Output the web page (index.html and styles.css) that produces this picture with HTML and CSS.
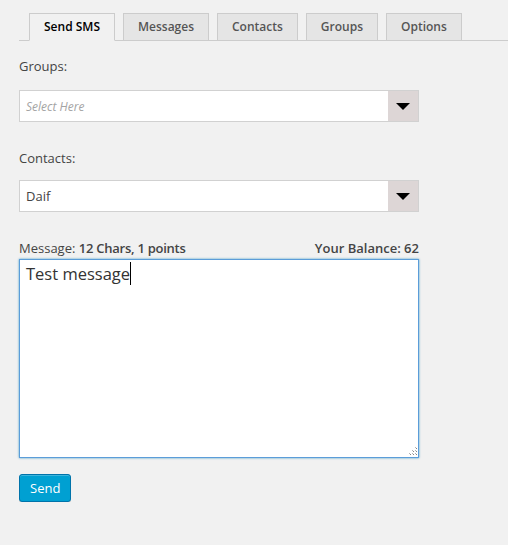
FILE: index.html
```html
<!DOCTYPE html>
<html>
<head>
<meta charset="utf-8">
<link rel="stylesheet" href="styles.css">
</head>
<body>
<div class="wrap">
  <nav class="tabs">
    <a class="tab active">Send SMS</a>
    <a class="tab">Messages</a>
    <a class="tab">Contacts</a>
    <a class="tab">Groups</a>
    <a class="tab">Options</a>
  </nav>

  <div class="field field-groups">
    <label class="label">Groups:</label>
    <div class="select">
      <span class="select-value placeholder">Select Here</span>
      <span class="select-arrow"><span class="tri"></span></span>
    </div>
  </div>

  <div class="field field-contacts">
    <label class="label">Contacts:</label>
    <div class="select">
      <span class="select-value">Daif</span>
      <span class="select-arrow"><span class="tri"></span></span>
    </div>
  </div>

  <div class="field field-message">
    <div class="msg-head">
      <span>Message: <b class="count">12 Chars, 1 points</b></span>
      <b>Your Balance: 62</b>
    </div>
    <div class="textarea">Test message<span class="caret"></span>
      <svg class="grip" width="9" height="9" viewBox="0 0 9 9">
        <rect x="7" y="0" width="1" height="1" fill="#b5b5b5"/>
        <rect x="7" y="3" width="1" height="1" fill="#b5b5b5"/>
        <rect x="4" y="3" width="1" height="1" fill="#b5b5b5"/>
        <rect x="7" y="6" width="1" height="1" fill="#b5b5b5"/>
        <rect x="4" y="6" width="1" height="1" fill="#b5b5b5"/>
        <rect x="1" y="6" width="1" height="1" fill="#b5b5b5"/>
        <rect x="8" y="1" width="1" height="1" fill="#888"/>
        <rect x="8" y="4" width="1" height="1" fill="#888"/>
        <rect x="5" y="4" width="1" height="1" fill="#888"/>
        <rect x="8" y="7" width="1" height="1" fill="#888"/>
        <rect x="5" y="7" width="1" height="1" fill="#888"/>
        <rect x="2" y="7" width="1" height="1" fill="#888"/>
      </svg>
    </div>
  </div>

  <button class="btn">Send</button>
</div>
</body>
</html>
```

FILE: styles.css
```css
html, body {
  margin: 0;
  padding: 0;
  background: #f1f1f1;
}
body {
  font-family: "Open Sans", "DejaVu Sans", sans-serif;
  font-size: 13px;
  color: #444;
}
.wrap {
  padding-left: 19px;
  padding-top: 13px;
}
.tabs {
  display: flex;
  gap: 8px;
  padding-left: 10px;
  border-bottom: 1px solid #ccc;
}
.tab {
  display: block;
  font-size: 12px;
  font-weight: 600;
  line-height: 26px;
  padding: 0 14px;
  border: 1px solid #ccc;
  background: #e5e5e5;
  color: #555;
  margin-bottom: -1px;
  text-decoration: none;
}
.tab.active {
  background: #f1f1f1;
  border-bottom-color: #f1f1f1;
  color: #000;
}
.field-groups { margin-top: 16px; }
.field-contacts { margin-top: 27px; }
.field-message { margin-top: 27px; }
.label {
  display: block;
  line-height: 18px;
  margin-bottom: 15px;
}
.field-contacts .label { margin-bottom: 13px; }
.select {
  width: 400px;
  height: 32px;
  box-sizing: border-box;
  border: 1px solid #d1d1d1;
  background: #fff;
  display: flex;
  align-items: stretch;
}
.select-value {
  flex: 1;
  display: flex;
  align-items: center;
  padding-left: 6px;
  color: #444;
}
.select-value.placeholder {
  font-style: italic;
  color: #a4a4a4;
  font-size: 12px;
}
.select-arrow {
  width: 30px;
  background: #ddd6d6;
  display: flex;
  align-items: center;
  justify-content: center;
}
.tri {
  width: 0;
  height: 0;
  border-left: 7px solid transparent;
  border-right: 7px solid transparent;
  border-top: 7px solid #000;
}
.msg-head {
  width: 400px;
  display: flex;
  justify-content: space-between;
  line-height: 18px;
  margin-bottom: 2px;
}
.msg-head b { font-weight: 600; }
.msg-head .count { letter-spacing: -0.25px; }
.textarea {
  position: relative;
  width: 400px;
  height: 199px;
  box-sizing: border-box;
  background: #fff;
  border: 1px solid #5b9dd9;
  box-shadow: 0 0 2px rgba(30, 140, 190, 0.8);
  padding: 2px 6px;
  font-size: 16.5px;
  line-height: 23px;
  color: #333;
}
.caret {
  display: inline-block;
  width: 1px;
  height: 23px;
  background: #000;
  vertical-align: top;
}
.grip {
  position: absolute;
  right: 1px;
  bottom: 1px;
}
.btn {
  display: block;
  margin-top: 16px;
  height: 28px;
  box-sizing: border-box;
  padding: 0 10px 1px;
  font-family: "Open Sans", "DejaVu Sans", sans-serif;
  font-size: 13px;
  line-height: 26px;
  color: #fff;
  background: #00a0d2;
  border: 1px solid #0073aa;
  border-radius: 3px;
  box-shadow: inset 0 1px 0 rgba(120, 200, 230, 0.5), 0 1px 0 rgba(0, 0, 0, 0.15);
}
```
